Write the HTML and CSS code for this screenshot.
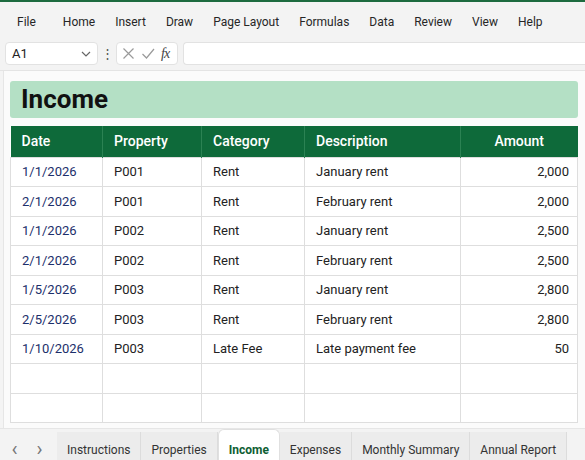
FILE: index.html
```html
<!DOCTYPE html>
<html lang="en">
<head>
    <meta charset="UTF-8">
    <meta name="viewport" content="width=device-width, initial-scale=1.0">
    <title>Income</title>
    <link rel="stylesheet" href="styles.css">
</head>
<body>
    <div class="app">
        <nav class="menu">
            <span class="menu-item first">File</span>
            <span class="menu-item">Home</span>
            <span class="menu-item">Insert</span>
            <span class="menu-item">Draw</span>
            <span class="menu-item">Page Layout</span>
            <span class="menu-item">Formulas</span>
            <span class="menu-item">Data</span>
            <span class="menu-item">Review</span>
            <span class="menu-item">View</span>
            <span class="menu-item">Help</span>
        </nav>

        <div class="formula-bar">
            <div class="name-box">
                <span>A1</span>
                <svg class="chevron" width="10" height="6" viewBox="0 0 10 6"><path d="M1 1l4 4 4-4" fill="none" stroke="#666" stroke-width="1.2"/></svg>
            </div>
            <span class="dots">&#8942;</span>
            <div class="fx-box">
                <svg width="13" height="13" viewBox="0 0 13 13"><path d="M1.5 1.5l10 10M11.5 1.5l-10 10" stroke="#9a9a9a" stroke-width="1.2"/></svg>
                <svg width="14" height="13" viewBox="0 0 14 13"><path d="M1.5 7l4 4 7.5-9" fill="none" stroke="#9a9a9a" stroke-width="1.2"/></svg>
                <span class="fx"><i>f</i><i>x</i></span>
            </div>
            <div class="formula-input"></div>
        </div>

        <main class="sheet">
            <div class="title-band">Income</div>
            <table class="grid">
                <thead>
                    <tr>
                        <th class="c-date">Date</th>
                        <th class="c-prop">Property</th>
                        <th class="c-cat">Category</th>
                        <th class="c-desc">Description</th>
                        <th class="c-amt">Amount</th>
                    </tr>
                </thead>
                <tbody>
                    <tr><td class="date">1/1/2026</td><td>P001</td><td>Rent</td><td>January rent</td><td class="num">2,000</td></tr>
                    <tr><td class="date">2/1/2026</td><td>P001</td><td>Rent</td><td>February rent</td><td class="num">2,000</td></tr>
                    <tr><td class="date">1/1/2026</td><td>P002</td><td>Rent</td><td>January rent</td><td class="num">2,500</td></tr>
                    <tr><td class="date">2/1/2026</td><td>P002</td><td>Rent</td><td>February rent</td><td class="num">2,500</td></tr>
                    <tr><td class="date">1/5/2026</td><td>P003</td><td>Rent</td><td>January rent</td><td class="num">2,800</td></tr>
                    <tr><td class="date">2/5/2026</td><td>P003</td><td>Rent</td><td>February rent</td><td class="num">2,800</td></tr>
                    <tr><td class="date">1/10/2026</td><td>P003</td><td>Late Fee</td><td>Late payment fee</td><td class="num">50</td></tr>
                    <tr><td></td><td></td><td></td><td></td><td></td></tr>
                    <tr><td></td><td></td><td></td><td></td><td></td></tr>
                </tbody>
            </table>
        </main>

        <footer class="tabs">
            <span class="arrow">&lsaquo;</span>
            <span class="arrow">&rsaquo;</span>
            <span class="tab">Instructions</span>
            <span class="tab">Properties</span>
            <span class="tab active">Income</span>
            <span class="tab">Expenses</span>
            <span class="tab">Monthly Summary</span>
            <span class="tab">Annual Report</span>
        </footer>
    </div>
</body>
</html>
```

FILE: styles.css
```css
* {
    box-sizing: border-box;
}
body {
    margin: 0;
    font-family: Roboto, "Liberation Sans", Arial, sans-serif;
    color: #222;
    background: #f4f4f4;
}
.app {
    width: 585px;
    height: 460px;
    overflow: hidden;
    border-top: 2px solid #1d6b3f;
    display: flex;
    flex-direction: column;
}

/* ribbon menu */
.menu {
    height: 37px;
    display: flex;
    align-items: center;
    gap: 20px;
    padding-left: 17px;
    padding-top: 2px;
    font-size: 12px;
    color: #262626;
    background: #f3f3f3;
}
.menu-item {
    white-space: nowrap;
}
.menu-item.first {
    margin-right: 7px;
}
.menu-item.wide {
    margin-left: 2px;
}

/* name box + formula line */
.formula-bar {
    height: 32px;
    display: flex;
    align-items: flex-start;
    padding: 3px 0 0 5px;
    background: #f3f3f3;
    border-bottom: 1px solid #e4e4e4;
}
.name-box {
    width: 93px;
    height: 23px;
    display: flex;
    align-items: center;
    justify-content: space-between;
    padding: 0 6px 0 6px;
    background: #fff;
    border: 1px solid #e2e2e2;
    border-radius: 4px;
    font-size: 13px;
}
.dots {
    width: 18px;
    text-align: center;
    font-size: 13px;
    line-height: 23px;
    color: #555;
}
.fx-box {
    width: 62px;
    height: 23px;
    display: flex;
    align-items: center;
    gap: 6px;
    padding-left: 5px;
    background: #fff;
    border: 1px solid #e2e2e2;
    border-radius: 4px;
}
.fx {
    font-family: "Liberation Serif", serif;
    font-size: 14px;
    color: #444;
    letter-spacing: -1px;
}
.formula-input {
    flex: 1;
    height: 23px;
    margin-left: 5px;
    background: #fff;
    border: 1px solid #e2e2e2;
    border-right: none;
    border-radius: 4px 0 0 4px;
}

/* worksheet */
.sheet {
    flex: 1;
    padding: 10px 7px 0 6px;
    margin-left: 3px;
    background: #fbfbfb;
    border-left: 1px solid #e6e6e6;
}
.title-band {
    height: 37px;
    line-height: 37px;
    padding-left: 11px;
    margin-bottom: 8px;
    background: #b4e0c5;
    border-radius: 3px;
    font-size: 26px;
    font-weight: 700;
    color: #111;
}
.grid {
    width: 568px;
    border-collapse: collapse;
    font-size: 13px;
    background: #fff;
}
.grid th {
    height: 31px;
    padding: 0 11px;
    text-align: left;
    font-size: 14px;
    font-weight: 500;
    color: #fff;
    background: #0e6a3a;
    border-left: 1px solid #2b8253;
}
.grid th:first-child {
    border-left: none;
}
.grid td {
    height: 29.5px;
    padding: 0 11px;
    border: 1px solid #dedede;
    color: #222;
}
.grid .c-date { width: 92px; }
.grid .c-prop { width: 99px; }
.grid .c-cat { width: 103px; }
.grid .c-desc { width: 156px; }
.grid .c-amt { text-align: center; }
.grid td.date {
    color: #1c2f6b;
}
.grid td.num {
    text-align: right;
    padding-right: 8px;
}

/* sheet tabs */
.tabs {
    height: 32px;
    display: flex;
    align-items: flex-start;
    padding: 3px 0 0 2px;
    background: #f3f3f3;
    border-top: 1px solid #e6e6e6;
    font-size: 12px;
}
.arrow {
    width: 25px;
    height: 30px;
    line-height: 34px;
    text-align: center;
    font-size: 20px;
    color: #777;
    flex-shrink: 0;
}
.tabs .arrow + .arrow {
    margin-right: 5px;
}
.tab {
    flex-shrink: 0;
    white-space: nowrap;
    height: 32px;
    line-height: 36px;
    padding: 0 10px;
    color: #333;
    background: #ececec;
    border-right: 1px solid #dcdcdc;
}
.tab.active {
    margin-top: -3px;
    height: 35px;
    line-height: 41px;
    padding: 0 10px;
    background: #fff;
    color: #0e5e33;
    font-weight: 700;
    border-radius: 6px 6px 0 0;
    border: 1px solid #e0e0e0;
    border-bottom: none;
}
```
